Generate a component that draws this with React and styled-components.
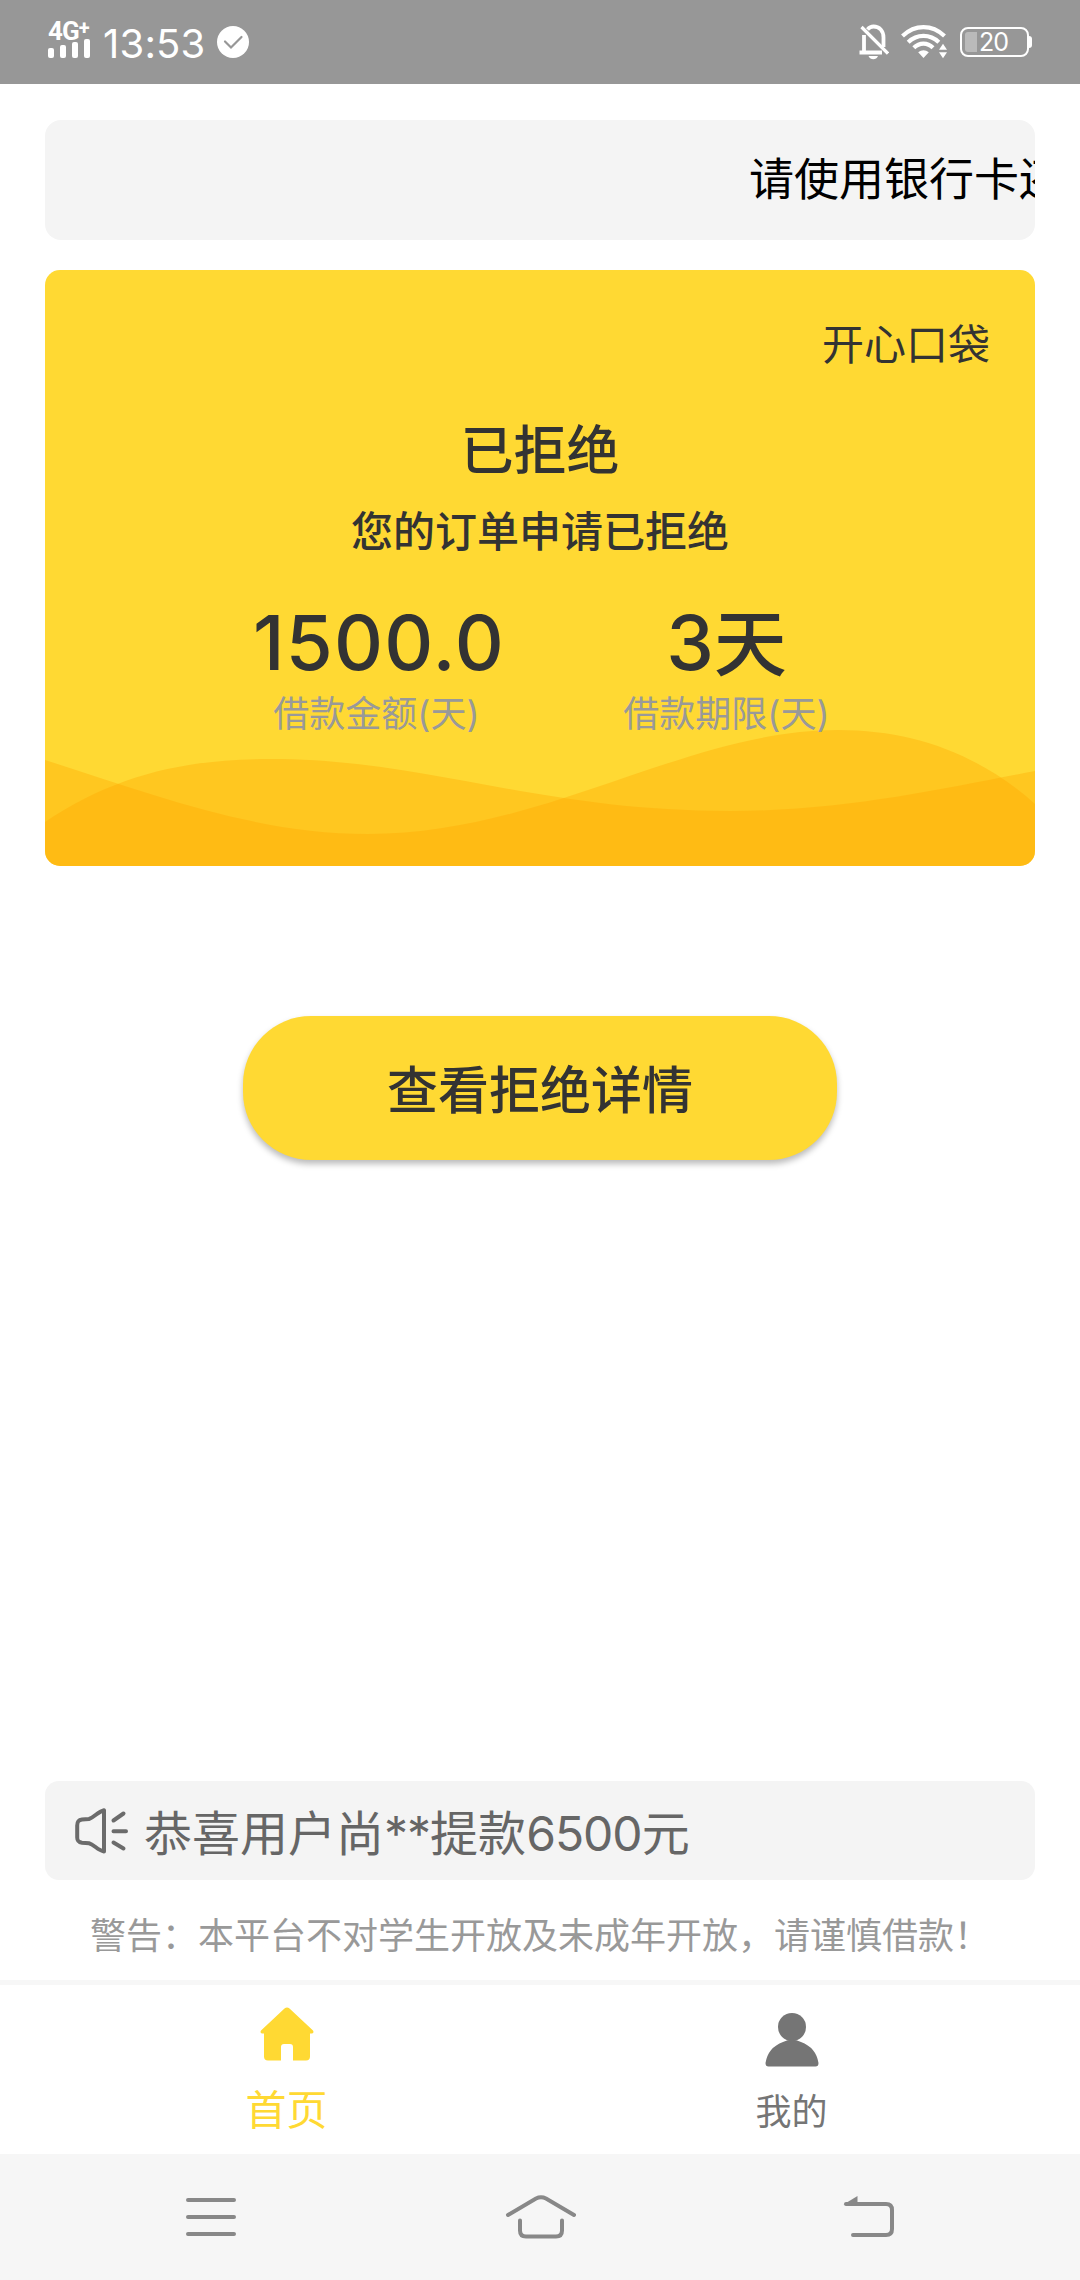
import React from 'react'
import styled, { createGlobalStyle } from "styled-components";


const GlobalStyle = createGlobalStyle`
  * {
    box-sizing: border-box;
  }

  body {
    margin: 0;
    background: #fff;
    font-family: Inter, "Noto Sans CJK SC", sans-serif;
    color: #333;
  }

  svg {
    display: block;
    flex: none;
  }
`;

const SignalIcon = () => (
  <svg width="42" height="20" viewBox="0 0 42 20" fill="#fff">
    <rect x="0" y="9" width="6" height="10" rx="2" />
    <rect x="12" y="6" width="6" height="13" rx="2" />
    <rect x="24" y="3" width="6" height="16" rx="2" />
    <rect x="36" y="0" width="6" height="19" rx="2" />
  </svg>
)

const CheckBadge = () => (
  <svg width="32" height="32" viewBox="0 0 32 32" fill="none">
    <circle cx="16" cy="16" r="16" fill="#fff" />
    <path d="M8 15.5l6 6L24.5 11" stroke="#979797" strokeWidth="2.2" strokeLinecap="round" />
  </svg>
)

const BellOffIcon = () => (
  <svg width="30" height="36" viewBox="0 0 30 36" fill="none" stroke="#fff">
    <path d="M5 30V11M8.5 5.5C10.3 3.4 12.2 2.5 14.5 2.5c6 0 10 4.5 10 11V23" strokeWidth="3.8" />
    <path d="M0.5 28.5H23" strokeWidth="4" />
    <path d="M2.5 3L29 29.5" strokeWidth="3.2" />
    <path d="M9.5 32h9.5c-1 2.2-2.6 3.2-4.7 3.2S10.5 34.2 9.5 32z" fill="#fff" stroke="none" />
  </svg>
)

const WifiIcon = () => (
  <svg width="47" height="34" viewBox="0 0 47 34" fill="none" stroke="#fff" strokeWidth="4.2">
    <path d="M1.5 11C14 -0.8 31 -0.8 43.5 11" />
    <path d="M7.2 17.2C16 8.8 29 8.8 37.8 17.2" />
    <path d="M12.8 22.8C18.5 17.3 26.5 17.3 32 22.8" />
    <path d="M17.2 27.3C20.5 24.4 24.5 24.4 27.8 27.3L22.5 33z" fill="#fff" stroke="none" />
    <path d="M38 24.8l4-6 4 6zM38 27.2l4 6 4-6z" fill="#fff" stroke="none" />
  </svg>
)

const SpeakerIcon = () => (
  <svg width="54" height="46" viewBox="0 0 54 46" fill="none" stroke="#6b6b6b" strokeWidth="4" strokeLinecap="round" strokeLinejoin="round">
    <path d="M2.2 17.5C2.2 13.5 3.5 12 7 11.5L14 11C19 9.5 23 3.5 29 2.2V43.5C23 42.5 19 36.5 14 35.2L7 34.7C3.5 34.2 2.2 33 2.2 29.5z" />
    <path d="M38.5 12.5l10-7M38.5 23.2h12.5M38.5 34.5l10 6" />
  </svg>
)

const HouseIcon = () => (
  <svg width="54" height="54" viewBox="0 0 54 54" fill="#ffd933">
    <path d="M24.5 1.5Q27 -0.5 29.5 1.5L53 23.5Q54.3 25.8 52 26.5H50V49.5Q50 53.5 46 53.5H33V40Q33 37 30 37H24Q21 37 21 40V53.5H8Q4 53.5 4 49.5V26.5H2Q-0.3 25.8 1 23.5z" />
  </svg>
)

const UserIcon = () => (
  <svg width="54" height="54" viewBox="0 0 54 54" fill="#757575">
    <circle cx="27" cy="14" r="14" />
    <path d="M18 29Q27 24.5 36 29Q51 34.5 53.5 50Q53.5 53.5 50.5 53.5H3.5Q0.5 53.5 0.5 50Q3 34.5 18 29z" />
  </svg>
)

const RecentIcon = () => (
  <svg width="50" height="44" viewBox="0 0 50 44" stroke="#888" strokeWidth="4" strokeLinecap="round">
    <path d="M2 5h46M2 22h46M2 39h46" />
  </svg>
)

const HomeKeyIcon = () => (
  <svg width="72" height="44" viewBox="-2 0 72 44" fill="none" stroke="#888" strokeWidth="4" strokeLinecap="round">
    <path d="M2 20L30 3.5Q35 1 40 3.5L68 20" />
    <path d="M14 25.5V35.5Q14 41.5 20 41.5H50Q56 41.5 56 35.5V25.5" />
  </svg>
)

const BackIcon = () => (
  <svg width="52" height="44" viewBox="0 0 52 44" fill="none" stroke="#888" strokeWidth="4" strokeLinecap="round">
    <path d="M3 9H43Q49 9 49 15V34Q49 40 43 40H10" />
    <path d="M0.5 9.5L14.5 1V10z" fill="#888" stroke="none" />
  </svg>
)

const tabs = [
  { name: "首页", icon: <HouseIcon />, active: true },
  { name: "我的", icon: <UserIcon />, active: false },
]

const App = () => {
  return (
    <>
      <GlobalStyle />
      <Screen>
        <StatusBar>
          <Network>
            <NetworkType>4G<Plus>+</Plus></NetworkType>
            <SignalIcon />
          </Network>
          <Clock>13:53</Clock>
          <CheckBadge />
          <StatusRight>
            <BellOffIcon />
            <WifiIcon />
            <Battery>
              <BatteryLevel />
              20
            </Battery>
          </StatusRight>
        </StatusBar>

        <Main>
          <Marquee>请使用银行卡还</Marquee>
          <Card>
            <Waves viewBox="0 0 990 596">
              <path d="M0 490C110 525 210 564 323 564C500 564 640 460 793 460C870 460 935 485 990 534V596H0z" />
              <path d="M0 552C70 505 140 489 225 489C385 489 490 541 685 541C800 541 900 518 990 501V596H0z" />
            </Waves>
            <Brand>开心口袋</Brand>
            <Status>已拒绝</Status>
            <StatusText>您的订单申请已拒绝</StatusText>
            <Figures>
              <Figure>
                <Value $amount><Digits>1500.0</Digits></Value>
                <Label>借款金额(天)</Label>
              </Figure>
              <Figure>
                <Value><Digits>3</Digits>天</Value>
                <Label>借款期限(天)</Label>
              </Figure>
            </Figures>
          </Card>
          <DetailButton>查看拒绝详情</DetailButton>
          <Broadcast>
            <SpeakerIcon />
            <BroadcastText>恭喜用户尚<Narrow>**</Narrow>提款<Narrow>6500</Narrow>元</BroadcastText>
          </Broadcast>
          <Warning>警告：本平台不对学生开放及未成年开放，请谨慎借款！</Warning>
        </Main>

        <TabBar>
          {tabs.map((tab) => (
            <Tab key={tab.name} $active={tab.active}>
              {tab.icon}
              <TabName $active={tab.active}>{tab.name}</TabName>
            </Tab>
          ))}
        </TabBar>
        <SystemNav>
          <RecentIcon />
          <HomeKeyIcon />
          <BackIcon />
        </SystemNav>
      </Screen>
    </>
  )
}

export default App

const Screen = styled.div`
  width: 1080px;
  height: 2280px;
  display: flex;
  flex-direction: column;
  overflow: hidden;
`;

const StatusBar = styled.header`
  height: 84px;
  display: flex;
  align-items: center;
  padding: 0 48px;
  background: #979797;
  color: #fff;
`;

const Network = styled.div`
  width: 42px;
  margin-top: -4px;
`;

const NetworkType = styled.div`
  height: 18px;
  font-family: Roboto, sans-serif;
  font-size: 26px;
  line-height: 20px;
  font-weight: 700;
  letter-spacing: -1px;
  white-space: nowrap;
`;

const Plus = styled.span`
  font-size: 20px;
  line-height: 1px;
  vertical-align: 5px;
`;

const Clock = styled.div`
  width: 114px;
  margin: 4px 0 0 13px;
  font-size: 40px;
  line-height: 48px;
  letter-spacing: 0.2px;
`;

const StatusRight = styled.div`
  display: flex;
  align-items: center;
  gap: 12px;
  margin-left: auto;
`;

const Battery = styled.div`
  position: relative;
  width: 69px;
  height: 30px;
  margin-right: 3px;
  border: 2px solid #fff;
  border-radius: 8px;
  display: flex;
  align-items: center;
  padding-left: 3px;
  font-size: 25px;
  letter-spacing: -1px;

  &::after {
    content: "";
    position: absolute;
    right: -5px;
    top: 7px;
    width: 3px;
    height: 12px;
    border-radius: 0 3px 3px 0;
    background: #fff;
  }
`;

const BatteryLevel = styled.span`
  width: 12px;
  height: 20px;
  margin-right: 2px;
  border-radius: 3px 0 0 3px;
  background: #bababa;
`;

const Main = styled.main`
  height: 1896px;
  padding: 36px 45px 0;
  display: flex;
  flex-direction: column;
`;

const Marquee = styled.div`
  height: 120px;
  flex: none;
  padding-left: 704px;
  border-radius: 16px;
  background: #f4f4f4;
  color: #000;
  font-size: 45px;
  line-height: 120px;
  white-space: nowrap;
  overflow: hidden;
`;

const Card = styled.section`
  position: relative;
  height: 596px;
  flex: none;
  margin-top: 30px;
  border-radius: 15px;
  background: #ffd933;
  overflow: hidden;
  display: flex;
  flex-direction: column;
  align-items: center;

  & > * {
    position: relative;
  }
`;

const Waves = styled.svg`
  && {
    position: absolute;
  }
  inset: 0;
  width: 990px;
  height: 596px;
  fill: #ffa600;
  fill-opacity: 0.36;
`;

const Brand = styled.div`
  align-self: flex-end;
  margin: 45px 45px 0 0;
  font-size: 42px;
  line-height: 60px;
`;

const Status = styled.h1`
  margin: 42px 0 0;
  font-size: 53px;
  line-height: 68px;
  font-weight: 500;
`;

const StatusText = styled.p`
  margin: 17px 0 0;
  font-size: 42px;
  line-height: 60px;
  font-weight: 500;
`;

const Figures = styled.div`
  display: grid;
  grid-template-columns: 350px 350px;
  margin: 40px 0 0 23px;
`;

const Figure = styled.div`
  display: flex;
  flex-direction: column;
  align-items: center;
`;

const Value = styled.div`
  font-size: 73px;
  line-height: 80px;
  height: 80px;
  padding-left: ${(props) => (props.$amount ? "5px" : "0")};
  letter-spacing: ${(props) => (props.$amount ? "1.2px" : "0")};
  font-weight: 500;
`;

const Digits = styled.span`
  font-size: 76px;
`;

const Label = styled.div`
  margin-top: 8px;
  color: #999;
  font-size: 36px;
  line-height: 48px;
`;

const DetailButton = styled.button`
  align-self: center;
  width: 594px;
  height: 144px;
  flex: none;
  margin-top: 150px;
  padding: 0 0 3px;
  border: 0;
  border-radius: 68px;
  background: #ffd933;
  box-shadow: 0 4px 6px rgba(0, 0, 0, 0.27);
  color: #333;
  font-family: inherit;
  font-size: 51px;
  font-weight: 500;
`;

const Broadcast = styled.div`
  height: 99px;
  flex: none;
  display: flex;
  align-items: center;
  gap: 15px;
  margin-top: 621px;
  padding-left: 30px;
  border-radius: 14px;
  background: #f4f4f4;
  color: #666;
`;

const BroadcastText = styled.span`
  padding-top: 6px;
  font-size: 48px;
  line-height: 93px;
`;

const Narrow = styled.span`
  letter-spacing: -1px;
`;

const Warning = styled.p`
  margin: 32px 0 0;
  text-align: center;
  color: #999;
  font-size: 36px;
  line-height: 48px;
  white-space: nowrap;
`;

const TabBar = styled.nav`
  height: 174px;
  flex: none;
  display: grid;
  grid-template-columns: 505px 505px;
  padding-left: 34px;
  border-top: 5px solid #f7f7f7;
`;

const Tab = styled.div`
  display: flex;
  flex-direction: column;
  align-items: center;
  padding-top: ${(props) => (props.$active ? "22px" : "28px")};
  color: ${(props) => (props.$active ? "#ffd933" : "#757575")};
`;

const TabName = styled.span`
  margin-top: ${(props) => (props.$active ? "24px" : "20px")};
  font-size: ${(props) => (props.$active ? "41px" : "36px")};
  line-height: 50px;
`;

const SystemNav = styled.footer`
  height: 126px;
  flex: none;
  display: grid;
  grid-template-columns: repeat(3, 329px);
  justify-content: center;
  justify-items: center;
  align-items: center;
  background: #f6f6f6;
`;
